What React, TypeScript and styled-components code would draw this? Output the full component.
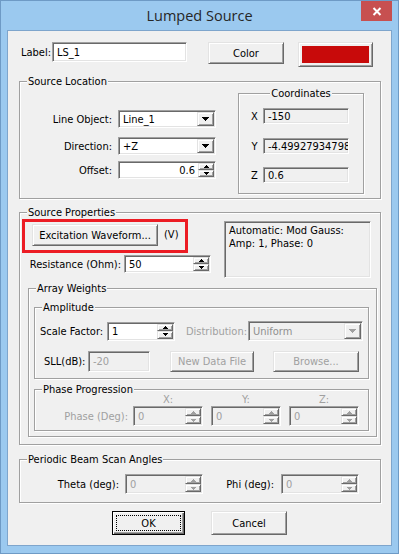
import React from "react";
import styled, { createGlobalStyle, css } from "styled-components";

const UI_FONT = `"DejaVu Sans Condensed", "Liberation Sans", Arial, sans-serif`;

const GlobalStyle = createGlobalStyle`
  html, body { margin: 0; padding: 0; background: #ffffff; }
  body { font-family: ${UI_FONT}; font-size: 11px; color: #000; }
  * { box-sizing: border-box; }
`;

const sunken = css`
  border: 1px solid;
  border-color: #a0a0a0 #ffffff #ffffff #a0a0a0;
  box-shadow: inset 1px 1px 0 #696969, inset -1px -1px 0 #e3e3e3;
`;

const raised = css`
  border: 1px solid;
  border-color: #e3e3e3 #696969 #696969 #e3e3e3;
  box-shadow: inset 1px 1px 0 #ffffff, inset -1px -1px 0 #a0a0a0;
`;

const DISABLED = "#a0a0a0";

const Window = styled.div`
  width: 399px;
  height: 554px;
  background: #9bc9ef;
  border: 1px solid #6e9ac5;
  padding: 0 6px 7px 6px;
  display: flex;
  flex-direction: column;
`;

const TitleBar = styled.div`
  height: 29px;
  flex-shrink: 0;
  display: grid;
  grid-template-columns: 1fr auto 1fr;
  align-items: start;
`;

const Title = styled.div`
  grid-column: 2;
  font-family: "Open Sans", "Noto Sans", sans-serif;
  font-size: 14.5px;
  line-height: 29px;
  color: #262626;
  white-space: nowrap;
`;

const CloseButton = styled.div`
  grid-column: 3;
  justify-self: end;
  width: 31px;
  height: 20px;
  background: #c75050;
  display: flex;
  align-items: center;
  justify-content: center;
`;

const Client = styled.div`
  height: 516px;
  flex-shrink: 0;
  background: #f0f0f0;
  border: 1px solid #7ea5cc;
  display: flex;
  flex-direction: column;
  align-items: flex-start;
`;

const TopRow = styled.div`
  display: flex;
  align-items: flex-start;
  height: 25px;
  margin: 11px 0 0 13px;
`;

const Row = styled.div<{ $h: number; $mt?: number; $ml?: number; $pl?: number }>`
  display: flex;
  align-items: center;
  flex-shrink: 0;
  height: ${(p) => p.$h}px;
  margin-top: ${(p) => p.$mt ?? 0}px;
  margin-left: ${(p) => p.$ml ?? 0}px;
  padding-left: ${(p) => p.$pl ?? 0}px;
`;

const Section = styled.div<{ $ml?: number }>`
  display: flex;
  align-items: flex-start;
  margin-left: ${(p) => p.$ml ?? 0}px;
`;

const Column = styled.div<{ $mt?: number }>`
  display: flex;
  flex-direction: column;
  align-items: flex-start;
  margin-top: ${(p) => p.$mt ?? 0}px;
`;

const Label = styled.div<{
  $w: number;
  $align?: "left" | "right" | "center";
  $pr?: number;
  $ml?: number;
  $disabled?: boolean;
}>`
  width: ${(p) => p.$w}px;
  flex-shrink: 0;
  text-align: ${(p) => p.$align ?? "left"};
  padding-right: ${(p) => p.$pr ?? 0}px;
  margin-left: ${(p) => p.$ml ?? 0}px;
  color: ${(p) => (p.$disabled ? DISABLED : "#000")};
  white-space: nowrap;
  line-height: 13px;
`;

const Group = styled.div<{ $w: number; $h: number; $mt: number; $ml: number }>`
  width: ${(p) => p.$w}px;
  height: ${(p) => p.$h}px;
  margin: ${(p) => p.$mt}px 0 0 ${(p) => p.$ml}px;
  flex-shrink: 0;
  border: 1px solid #a0a0a0;
  box-shadow: inset 1px 1px 0 #ffffff, 1px 1px 0 #ffffff;
  display: flex;
  flex-direction: column;
  align-items: flex-start;
`;

const Caption = styled.div<{ $center?: boolean }>`
  height: 13px;
  line-height: 13px;
  margin: -7px 0 0 7px;
  padding: 0 1px;
  background: #f0f0f0;
  white-space: nowrap;
  ${(p) =>
    p.$center &&
    css`
      margin: -7px auto 0;
      align-self: center;
    `}
`;

const GroupBody = styled.div<{ $pl?: number }>`
  display: flex;
  align-items: flex-start;
  padding-left: ${(p) => p.$pl ?? 0}px;
`;

const TextBox = styled.div<{ $w: number; $h: number; $disabled?: boolean; $readOnly?: boolean }>`
  ${sunken};
  width: ${(p) => p.$w}px;
  height: ${(p) => p.$h}px;
  flex-shrink: 0;
  background: ${(p) => (p.$disabled || p.$readOnly ? "#f0f0f0" : "#ffffff")};
  color: ${(p) => (p.$disabled ? DISABLED : "#000")};
  display: flex;
  align-items: center;
  padding: 0 3px 0 4px;
  white-space: nowrap;
  overflow: hidden;
`;

const Button = styled.div<{
  $w: number;
  $h: number;
  $ml?: number;
  $disabled?: boolean;
  $default?: boolean;
}>`
  ${raised};
  width: ${(p) => p.$w}px;
  height: ${(p) => p.$h}px;
  margin-left: ${(p) => p.$ml ?? 0}px;
  flex-shrink: 0;
  background: #f0f0f0;
  color: ${(p) => (p.$disabled ? DISABLED : "#000")};
  display: flex;
  align-items: center;
  justify-content: center;
  white-space: nowrap;
  ${(p) =>
    p.$default &&
    css`
      border: 1px solid #000;
      box-shadow: inset 1px 1px 0 #ffffff, inset -1px -1px 0 #696969, inset -2px -2px 0 #a0a0a0;
      outline: 1px dotted #000;
      outline-offset: -5px;
    `}
`;

const Swatch = styled.div`
  ${raised};
  width: 75px;
  height: 25px;
  margin-left: 14px;
  padding: 3px;
  background: #f0f0f0;
  display: flex;
`;

const SwatchFill = styled.div`
  flex: 1;
  background: #c80a0a;
`;

const ComboFrame = styled.div<{ $w: number; $h: number; $disabled?: boolean }>`
  ${sunken};
  width: ${(p) => p.$w}px;
  height: ${(p) => p.$h}px;
  flex-shrink: 0;
  padding: 1px;
  display: flex;
  background: ${(p) => (p.$disabled ? "#f0f0f0" : "#ffffff")};
  color: ${(p) => (p.$disabled ? "#8f8f8f" : "#000")};
`;

const FieldText = styled.div<{ $right?: boolean }>`
  flex: 1;
  min-width: 0;
  display: flex;
  align-items: center;
  justify-content: ${(p) => (p.$right ? "flex-end" : "flex-start")};
  padding: 0 3px 0 3px;
  white-space: nowrap;
  overflow: hidden;
`;

const DropButton = styled.div`
  ${raised};
  width: 17px;
  flex-shrink: 0;
  background: #f0f0f0;
  display: flex;
  align-items: center;
  justify-content: center;
`;

const SpinFrame = styled.div<{ $w: number; $h: number; $ml?: number; $disabled?: boolean }>`
  ${sunken};
  width: ${(p) => p.$w}px;
  height: ${(p) => p.$h}px;
  margin-left: ${(p) => p.$ml ?? 0}px;
  flex-shrink: 0;
  padding: 1px;
  display: flex;
  background: ${(p) => (p.$disabled ? "#f0f0f0" : "#ffffff")};
  color: ${(p) => (p.$disabled ? DISABLED : "#000")};
`;

const SpinColumn = styled.div`
  width: 16px;
  flex-shrink: 0;
  display: flex;
  flex-direction: column;
`;

const SpinButton = styled.div`
  ${raised};
  flex: 1;
  background: #f0f0f0;
  display: flex;
  align-items: center;
  justify-content: center;
`;

const Highlight = styled.div`
  width: 166px;
  height: 34px;
  border: 3px solid #ec1c24;
  padding: 2px 0 0 7px;
  display: flex;
  align-items: flex-start;
`;

const Unit = styled.div`
  margin-left: 6px;
  line-height: 22px;
  white-space: nowrap;
`;

const InfoBox = styled.div`
  ${sunken};
  width: 147px;
  height: 57px;
  margin: 2px 0 0 13px;
  flex-shrink: 0;
  background: #f0f0f0;
  padding: 2px 3px 0 4px;
  line-height: 13px;
  white-space: nowrap;
`;

const AxisLabel = styled.div<{ $ml?: number }>`
  width: 70px;
  flex-shrink: 0;
  margin-left: ${(p) => p.$ml ?? 0}px;
  text-align: center;
  line-height: 13px;
  color: ${DISABLED};
`;

const TriSvg = styled.svg`
  display: block;
  flex-shrink: 0;
`;

function Tri({ dir, w, color }: { dir: "up" | "down"; w: number; color: string }) {
  const rows = Math.ceil(w / 2);
  const rects = [];
  for (let i = 0; i < rows; i++) {
    const y = dir === "down" ? i : rows - 1 - i;
    rects.push(<rect key={i} x={i} y={y} width={w - 2 * i} height={1} fill={color} />);
  }
  return (
    <TriSvg width={w} height={rows} viewBox={`0 0 ${w} ${rows}`} shapeRendering="crispEdges">
      {rects}
    </TriSvg>
  );
}

function ComboBox({
  w,
  h,
  value,
  disabled,
}: {
  w: number;
  h: number;
  value: string;
  disabled?: boolean;
}) {
  return (
    <ComboFrame $w={w} $h={h} $disabled={disabled}>
      <FieldText>{value}</FieldText>
      <DropButton>
        <Tri dir="down" w={7} color={disabled ? DISABLED : "#000"} />
      </DropButton>
    </ComboFrame>
  );
}

function SpinEdit({
  w,
  h,
  ml,
  value,
  right,
  disabled,
}: {
  w: number;
  h: number;
  ml?: number;
  value: string;
  right?: boolean;
  disabled?: boolean;
}) {
  const c = disabled ? DISABLED : "#000";
  return (
    <SpinFrame $w={w} $h={h} $ml={ml} $disabled={disabled}>
      <FieldText $right={right}>{value}</FieldText>
      <SpinColumn>
        <SpinButton>
          <Tri dir="up" w={5} color={c} />
        </SpinButton>
        <SpinButton>
          <Tri dir="down" w={5} color={c} />
        </SpinButton>
      </SpinColumn>
    </SpinFrame>
  );
}

export default function App() {
  return (
    <>
      <GlobalStyle />
      <Window>
        <TitleBar>
          <Title>Lumped Source</Title>
          <CloseButton>
            <svg width="10" height="9" viewBox="0 0 10 9">
              <path d="M1.5 1 L8.5 8 M8.5 1 L1.5 8" stroke="#ffffff" strokeWidth="2" fill="none" />
            </svg>
          </CloseButton>
        </TitleBar>

        <Client>
          <TopRow>
            <Label $w={31}>
              <Row $h={20}>Label:</Row>
            </Label>
            <TextBox $w={135} $h={20}>
              LS_1
            </TextBox>
            <Button $w={76} $h={22} $ml={21}>
              Color
            </Button>
            <Swatch>
              <SwatchFill />
            </Swatch>
          </TopRow>

          <Group $w={362} $h={118} $mt={14} $ml={11}>
            <Caption>Source Location</Caption>
            <GroupBody $pl={10}>
              <Column $mt={22}>
                <Row $h={18}>
                  <Label $w={88} $align="right" $pr={6}>
                    Line Object:
                  </Label>
                  <ComboBox w={98} h={18} value="Line_1" />
                </Row>
                <Row $h={18} $mt={9}>
                  <Label $w={88} $align="right" $pr={6}>
                    Direction:
                  </Label>
                  <ComboBox w={98} h={18} value="+Z" />
                </Row>
                <Row $h={18} $mt={6}>
                  <Label $w={88} $align="right" $pr={6}>
                    Offset:
                  </Label>
                  <SpinEdit w={98} h={18} value="0.6" right />
                </Row>
              </Column>

              <Group $w={126} $h={101} $mt={5} $ml={22}>
                <Caption $center>Coordinates</Caption>
                <Row $h={16} $mt={8} $pl={7}>
                  <Label $w={17} $align="center">
                    X
                  </Label>
                  <TextBox $w={86} $h={16} $readOnly>
                    -150
                  </TextBox>
                </Row>
                <Row $h={16} $mt={14} $pl={7}>
                  <Label $w={17} $align="center">
                    Y
                  </Label>
                  <TextBox $w={86} $h={16} $readOnly>
                    -4.4992793479816
                  </TextBox>
                </Row>
                <Row $h={16} $mt={13} $pl={7}>
                  <Label $w={17} $align="center">
                    Z
                  </Label>
                  <TextBox $w={86} $h={16} $readOnly>
                    0.6
                  </TextBox>
                </Row>
              </Group>
            </GroupBody>
          </Group>

          <Group $w={362} $h={233} $mt={13} $ml={11}>
            <Caption>Source Properties</Caption>
            <Section $ml={2}>
              <Column>
                <Highlight>
                  <Button $w={126} $h={22}>
                    Excitation Waveform...
                  </Button>
                  <Unit>(V)</Unit>
                </Highlight>
                <Row $h={18} $mt={2} $ml={0}>
                  <Label $w={102} $align="right" $pr={3}>
                    Resistance (Ohm):
                  </Label>
                  <SpinEdit w={87} h={18} value="50" />
                </Row>
              </Column>
              <InfoBox>
                Automatic: Mod Gauss:
                <br />
                Amp: 1, Phase: 0
              </InfoBox>
            </Section>

            <Group $w={349} $h={149} $mt={10} $ml={8}>
              <Caption>Array Weights</Caption>

              <Group $w={335} $h={72} $mt={12} $ml={5}>
                <Caption>Amplitude</Caption>
                <Row $h={20} $mt={7} $pl={5}>
                  <Label $w={67}>Scale Factor:</Label>
                  <SpinEdit w={68} h={19} value="1" />
                  <Label $w={73} $align="right" $pr={1} $disabled>
                    Distribution:
                  </Label>
                  <ComboBox w={115} h={20} value="Uniform" disabled />
                </Row>
                <Row $h={21} $mt={10} $pl={9}>
                  <Label $w={44}>SLL(dB):</Label>
                  <TextBox $w={62} $h={21} $disabled>
                    -20
                  </TextBox>
                  <Button $w={84} $h={21} $ml={20} $disabled>
                    New Data File
                  </Button>
                  <Button $w={86} $h={21} $ml={19} $disabled>
                    Browse...
                  </Button>
                </Row>
              </Group>

              <Group $w={335} $h={42} $mt={10} $ml={5}>
                <Caption>Phase Progression</Caption>
                <Row $h={13} $mt={-3} $pl={98}>
                  <AxisLabel>X:</AxisLabel>
                  <AxisLabel $ml={8}>Y:</AxisLabel>
                  <AxisLabel $ml={8}>Z:</AxisLabel>
                </Row>
                <Row $h={20}>
                  <Label $w={98} $align="right" $pr={5} $disabled>
                    Phase (Deg):
                  </Label>
                  <SpinEdit w={70} h={20} value="0" disabled />
                  <SpinEdit w={70} h={20} ml={8} value="0" disabled />
                  <SpinEdit w={70} h={20} ml={8} value="0" disabled />
                </Row>
              </Group>
            </Group>
          </Group>

          <Group $w={362} $h={44} $mt={14} $ml={11}>
            <Caption>Periodic Beam Scan Angles</Caption>
            <Row $h={20} $mt={8}>
              <Label $w={105} $align="right" $pr={6}>
                Theta (deg):
              </Label>
              <SpinEdit w={78} h={20} value="0" disabled />
              <Label $w={78} $align="right" $pr={7}>
                Phi (deg):
              </Label>
              <SpinEdit w={78} h={20} value="0" disabled />
            </Row>
          </Group>

          <Row $h={24} $mt={8} $ml={104}>
            <Button $w={73} $h={24} $default>
              OK
            </Button>
            <Button $w={76} $h={24} $ml={26}>
              Cancel
            </Button>
          </Row>
        </Client>
      </Window>
    </>
  );
}
